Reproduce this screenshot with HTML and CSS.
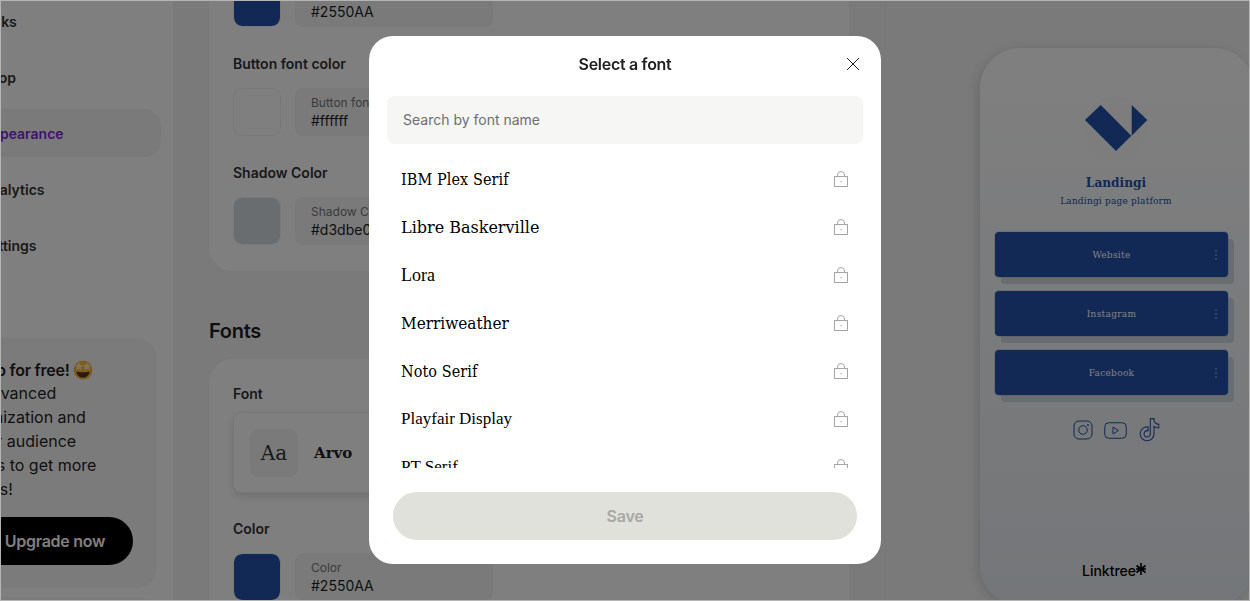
FILE: index.html
```html
<!DOCTYPE html>
<html>
  <head>
    <title>Select a font</title>
    <link rel="stylesheet" href="styles.css">
  </head>
  <body>
    <div class="app">
      <aside class="sidebar">
        <ul class="nav">
          <li class="navitem">Links</li>
          <li class="navitem">Shop</li>
          <li class="navitem active">Appearance</li>
          <li class="navitem">Analytics</li>
          <li class="navitem">Settings</li>
        </ul>
        <div class="upgrade">
          <p class="upgrade-title">Level up for free!
            <svg class="emoji" viewBox="0 0 20 20">
              <circle cx="10" cy="10" r="9.500" fill="#f5b840"/>
              <path d="M3.500 11.500c2 1 11 1 13 0-.5 4-3 6-6.500 6s-6-2-6.500-6z" fill="#5a3210"/>
              <path d="M6 2l1.300 3 3 .3-2.300 2 .7 3L6 8.800 3.300 10.300l.7-3-2.300-2 3-.3z" fill="#ffe9b0"/>
              <path d="M14 2l1.300 3 3 .3-2.300 2 .7 3L14 8.800l-2.700 1.500.7-3-2.300-2 3-.3z" fill="#ffe9b0"/>
            </svg>
          </p>
          <p class="upgrade-text">With advanced<br>&nbsp;customization and<br>for your audience<br>features to get more<br>contacts!</p>
          <button class="upgrade-btn">Upgrade now</button>
        </div>
        <div class="upgrade-next"></div>
      </aside>

      <main class="main">
        <section class="card card-top">
          <div class="color-row">
            <div class="swatch swatch-blue"></div>
            <div class="field"><span class="field-label">Button color</span><span class="field-value">#2550AA</span></div>
          </div>
          <h3 class="label">Button font color</h3>
          <div class="color-row">
            <div class="swatch swatch-white"></div>
            <div class="field"><span class="field-label">Button font color</span><span class="field-value">#ffffff</span></div>
          </div>
          <h3 class="label">Shadow Color</h3>
          <div class="color-row">
            <div class="swatch swatch-shadow"></div>
            <div class="field"><span class="field-label">Shadow Color</span><span class="field-value">#d3dbe0</span></div>
          </div>
        </section>

        <h2 class="section-title">Fonts</h2>
        <section class="card card-fonts">
          <h3 class="label label-first">Font</h3>
          <div class="font-picker">
            <div class="font-aa">Aa</div>
            <div class="font-name">Arvo</div>
          </div>
          <h3 class="label label-color">Color</h3>
          <div class="color-row">
            <div class="swatch swatch-blue"></div>
            <div class="field"><span class="field-label">Color</span><span class="field-value">#2550AA</span></div>
          </div>
        </section>
      </main>

      <aside class="preview">
        <div class="phone">
          <div class="profile">
            <div class="avatar">
              <svg width="64" height="64" viewBox="0 0 64 64">
                <polygon points="16.700,9 1,24 32,55 47.300,39.700" fill="#2550AA"/>
                <polygon points="47.700,9 63.300,24 47.700,39.700" fill="#2550AA"/>
              </svg>
            </div>
            <div class="profile-name">Landingi</div>
            <div class="profile-bio">Landingi page platform</div>
          </div>
          <div class="links">
            <a class="link" href="#">Website<svg class="dots" width="2" height="10" viewBox="0 0 2 10"><circle cx="1" cy="1" r=".8"/><circle cx="1" cy="5" r=".8"/><circle cx="1" cy="9" r=".8"/></svg></a>
            <a class="link" href="#">Instagram<svg class="dots" width="2" height="10" viewBox="0 0 2 10"><circle cx="1" cy="1" r=".8"/><circle cx="1" cy="5" r=".8"/><circle cx="1" cy="9" r=".8"/></svg></a>
            <a class="link" href="#">Facebook<svg class="dots" width="2" height="10" viewBox="0 0 2 10"><circle cx="1" cy="1" r=".8"/><circle cx="1" cy="5" r=".8"/><circle cx="1" cy="9" r=".8"/></svg></a>
          </div>
          <div class="socials">
            <svg width="20" height="20" viewBox="0 0 20 20"><rect x="1" y="1" width="18" height="18" rx="5"/><circle cx="10" cy="10" r="4.300"/><circle cx="15" cy="5" r=".6"/></svg>
            <svg class="social-yt" width="23" height="17" viewBox="0 0 23 17"><rect x=".75" y=".75" width="21.500" height="15.500" rx="4"/><path d="M9 5v7l5.500-3.500z"/></svg>
            <svg class="social-tt" width="26" height="26" viewBox="0 0 24 24"><path d="M16.600 1.500h-3.400v14a2.900 2.900 0 1 1-2.900-2.900c.3 0 .6 0 .9.1V9.200a6.400 6.400 0 1 0 5.400 6.300V8.700a7.600 7.600 0 0 0 4.400 1.400V6.700a4.400 4.400 0 0 1-4.400-5.200z"/></svg>
          </div>
          <div class="brand">Linktree<svg class="brand-mark" width="10" height="12" viewBox="0 0 10 12"><path d="M5 0v12M.5 2.500l9 7M9.500 2.500l-9 7M0 6h10"/></svg></div>
        </div>
      </aside>
    </div>

    <div class="overlay">
      <div class="modal">
        <div class="modal-head">
          <h2 class="modal-title">Select a font</h2>
          <button class="modal-close">
            <svg width="14" height="14" viewBox="0 0 14 14"><path d="M1 1l12 12M13 1L1 13"/></svg>
          </button>
        </div>
        <input class="search" type="text" placeholder="Search by font name">
        <ul class="font-list">
          <li class="font-row"><span class="f-plex">IBM Plex Serif</span><svg class="lock" width="14" height="16" viewBox="0 0 14 16"><rect x=".5" y="5.500" width="13" height="10"/><path d="M3.500 5.500V4a3.500 3.500 0 0 1 7 0v1.500"/><circle class="lock-dot" cx="7" cy="10.500" r=".7"/></svg></li>
          <li class="font-row"><span class="f-libre">Libre Baskerville</span><svg class="lock" width="14" height="16" viewBox="0 0 14 16"><rect x=".5" y="5.500" width="13" height="10"/><path d="M3.500 5.500V4a3.500 3.500 0 0 1 7 0v1.500"/><circle class="lock-dot" cx="7" cy="10.500" r=".7"/></svg></li>
          <li class="font-row"><span class="f-lora">Lora</span><svg class="lock" width="14" height="16" viewBox="0 0 14 16"><rect x=".5" y="5.500" width="13" height="10"/><path d="M3.500 5.500V4a3.500 3.500 0 0 1 7 0v1.500"/><circle class="lock-dot" cx="7" cy="10.500" r=".7"/></svg></li>
          <li class="font-row"><span class="f-merri">Merriweather</span><svg class="lock" width="14" height="16" viewBox="0 0 14 16"><rect x=".5" y="5.500" width="13" height="10"/><path d="M3.500 5.500V4a3.500 3.500 0 0 1 7 0v1.500"/><circle class="lock-dot" cx="7" cy="10.500" r=".7"/></svg></li>
          <li class="font-row"><span class="f-noto">Noto Serif</span><svg class="lock" width="14" height="16" viewBox="0 0 14 16"><rect x=".5" y="5.500" width="13" height="10"/><path d="M3.500 5.500V4a3.500 3.500 0 0 1 7 0v1.500"/><circle class="lock-dot" cx="7" cy="10.500" r=".7"/></svg></li>
          <li class="font-row"><span class="f-play">Playfair Display</span><svg class="lock" width="14" height="16" viewBox="0 0 14 16"><rect x=".5" y="5.500" width="13" height="10"/><path d="M3.500 5.500V4a3.500 3.500 0 0 1 7 0v1.500"/><circle class="lock-dot" cx="7" cy="10.500" r=".7"/></svg></li>
          <li class="font-row"><span class="f-pt">PT Serif</span><svg class="lock" width="14" height="16" viewBox="0 0 14 16"><rect x=".5" y="5.500" width="13" height="10"/><path d="M3.500 5.500V4a3.500 3.500 0 0 1 7 0v1.500"/><circle class="lock-dot" cx="7" cy="10.500" r=".7"/></svg></li>
        </ul>
        <button class="save">Save</button>
      </div>
    </div>
  </body>
</html>
```

FILE: styles.css
```css
* {
  box-sizing: border-box;
}

body {
  margin: 0;
  font-family: Inter, "Liberation Sans", sans-serif;
  color: #1f1f1f;
  overflow: hidden;
}

h2, h3, p, ul {
  margin: 0;
  padding: 0;
}

.app {
  display: flex;
  width: 1250px;
  height: 601px;
  overflow: hidden;
}

/* left menu, cut off by the window edge */
.sidebar {
  flex: none;
  width: 173px;
  height: 601px;
  overflow: hidden;
  background-color: #fff;
}

.nav {
  list-style-type: none;
  display: flex;
  flex-direction: column;
  gap: 8px;
  margin: -3px 0 0 -40px;
}

.navitem {
  display: flex;
  align-items: center;
  width: 201px;
  height: 48px;
  padding-left: 21px;
  border-radius: 16px;
  font-size: 14px;
  font-weight: 600;
  color: #333;
}

.navitem.active {
  background-color: #f5f5f5;
  color: #8129d9;
}

.upgrade {
  width: 237px;
  height: 250px;
  margin: 69px 0 0 -80px;
  padding: 21px 0 0 23px;
  border-radius: 20px;
  background-color: #f7f7f7;
}

.upgrade-title {
  display: flex;
  align-items: center;
  gap: 3px;
  height: 22px;
  font-size: 16px;
  font-weight: 600;
  letter-spacing: -0.25px;
  white-space: nowrap;
}

.emoji {
  width: 20px;
  height: 20px;
}

.upgrade-text {
  font-size: 16px;
  line-height: 24px;
  white-space: nowrap;
}

.upgrade-btn {
  display: block;
  width: 156px;
  height: 48px;
  margin: 16px 0 0 34px;
  border: none;
  border-radius: 24px;
  background-color: #000;
  color: #fff;
  font-family: inherit;
  font-size: 16px;
  font-weight: 600;
  letter-spacing: -0.25px;
}

.upgrade-next {
  width: 237px;
  height: 40px;
  margin: 9px 0 0 -80px;
  border-radius: 20px;
  background-color: #f7f7f7;
}

/* middle column */
.main {
  flex: none;
  width: 713px;
  height: 601px;
  overflow: hidden;
  padding: 0 36px;
  background-color: #f5f5f5;
  border-right: 1px solid #eee;
}

.card {
  width: 640px;
  padding: 0 24px;
  border-radius: 24px;
  background-color: #fff;
}

.card-top {
  margin-top: -40px;
  padding-top: 19px;
  padding-bottom: 26px;
}

.card-fonts {
  padding-top: 25px;
  padding-bottom: 30px;
}

.section-title {
  margin: 48px 0 16px;
  font-size: 20px;
  line-height: 24px;
  font-weight: 600;
  letter-spacing: -0.3px;
}

.label {
  margin: 27px 0 14px;
  font-size: 14px;
  line-height: 20px;
  font-weight: 600;
  color: #333;
}

.label-first {
  margin: 0 0 8px;
}

.label-color {
  margin-top: 26px;
}

.color-row {
  display: flex;
  gap: 14px;
}

.swatch {
  width: 48px;
  height: 48px;
  border: 1px solid #f3f3f3;
  border-radius: 9px;
  background-clip: padding-box;
}

.swatch-blue {
  background-color: #2550AA;
}

.swatch-white {
  background-color: #fff;
}

.swatch-shadow {
  background-color: #d3dbe0;
}

.field {
  display: flex;
  flex-direction: column;
  justify-content: center;
  gap: 2px;
  width: 198px;
  height: 48px;
  padding-left: 16px;
  border-radius: 8px;
  background-color: #f5f5f5;
}

.field-label {
  font-size: 12px;
  line-height: 15px;
  color: #777;
}

.field-value {
  font-size: 14px;
  line-height: 18px;
  color: #1f1f1f;
}

.font-picker {
  display: flex;
  align-items: center;
  gap: 16px;
  width: 592px;
  height: 81px;
  padding-left: 16px;
  border: 1px solid #eee;
  border-radius: 8px;
  box-shadow: 0 4px 8px rgba(0, 0, 0, 0.12);
}

.font-aa {
  display: flex;
  align-items: center;
  justify-content: center;
  width: 48px;
  height: 48px;
  border-radius: 8px;
  background-color: #f5f5f5;
  font-family: "DejaVu Serif", serif;
  font-size: 20px;
  color: #333;
}

.font-name {
  font-family: "DejaVu Serif", serif;
  font-size: 15px;
  font-weight: 700;
  color: #222;
}

/* phone preview */
.preview {
  flex: 1;
  padding: 48px 0 0 94px;
  background-color: #f4f4f4;
}

.phone {
  display: flex;
  flex-direction: column;
  width: 274px;
  height: 557px;
  padding: 48px 0 24px 4px;
  border-radius: 40px;
  background: linear-gradient(#fff, #e8edf2);
  box-shadow: -2px 3px 12px rgba(0, 0, 0, 0.14);
}

.profile {
  display: flex;
  flex-direction: column;
  align-items: center;
  width: 264px;
  font-family: "DejaVu Serif", serif;
  font-stretch: condensed;
  color: #2550AA;
}

.avatar {
  width: 64px;
  height: 64px;
  border-radius: 50%;
  background-color: #fbfbfb;
}

.profile-name {
  margin-top: 12px;
  font-size: 13.500px;
  line-height: 20px;
  font-weight: 700;
}

.profile-bio {
  font-size: 10px;
  line-height: 18px;
  letter-spacing: 0.2px;
}

.links {
  display: flex;
  flex-direction: column;
  gap: 14px;
  width: 233px;
  margin: 22px 0 0 11px;
}

.link {
  position: relative;
  display: flex;
  align-items: center;
  justify-content: center;
  height: 45px;
  padding-bottom: 1px;
  border-radius: 4px;
  background-color: #2550AA;
  box-shadow: 0 0 0 1px rgba(37, 80, 170, 0.15), 6px 7px 0 #d3dbe0;
  font-family: "DejaVu Serif", serif;
  font-stretch: condensed;
  font-size: 10px;
  letter-spacing: 0.3px;
  color: #fff;
  text-decoration: none;
}

.dots {
  position: absolute;
  right: 11px;
  top: 18px;
  fill: #c5cfe6;
}

.socials {
  display: flex;
  align-items: center;
  gap: 8px;
  width: 264px;
  height: 22px;
  margin-top: 24px;
  padding-left: 89px;
}

.socials svg {
  flex: none;
  fill: none;
  stroke: #2550AA;
  stroke-width: 1;
}

.social-yt {
  margin-left: 3px;
}

.social-tt {
  margin-left: 1px;
}

.brand {
  display: flex;
  align-items: center;
  justify-content: center;
  width: 260px;
  margin-top: auto;
  font-size: 14px;
  line-height: 20px;
  font-weight: 500;
  color: #000;
}

.brand-mark {
  flex: none;
  margin: -4px 0 0 0;
  fill: none;
  stroke: #000;
  stroke-width: 1.600;
}

/* dimmed layer and dialog */
.overlay {
  position: fixed;
  top: 0;
  left: 0;
  width: 1250px;
  height: 601px;
  display: flex;
  justify-content: center;
  padding-top: 36px;
  background-color: rgba(0, 0, 0, 0.5);
  box-shadow: inset 0 0 0 1px #b5b5b5;
}

.modal {
  display: flex;
  flex-direction: column;
  width: 512px;
  height: 528px;
  padding: 0 18px;
  border-radius: 24px;
  background-color: #fff;
}

.modal-head {
  position: relative;
  height: 60px;
  padding-top: 16px;
  text-align: center;
}

.modal-title {
  font-size: 16px;
  line-height: 24px;
  font-weight: 600;
  letter-spacing: -0.3px;
}

.modal-close {
  position: absolute;
  top: 21px;
  right: 3px;
  width: 14px;
  height: 14px;
  padding: 0 0 1px;
  border: none;
  background: none;
}

.modal-close svg {
  display: block;
  fill: none;
  stroke: #222;
  stroke-width: 1;
}

.search {
  flex: none;
  width: 476px;
  height: 48px;
  padding: 0 16px 2px;
  border: none;
  border-radius: 8px;
  background-color: #f6f6f4;
  font-family: inherit;
  font-size: 14px;
}

.search::placeholder {
  color: #6e6e6e;
  opacity: 1;
}

.font-list {
  list-style-type: none;
  height: 313px;
  margin-top: 11px;
  overflow: hidden;
}

.font-row {
  display: flex;
  align-items: center;
  justify-content: space-between;
  height: 48px;
  padding: 0 15px 0 14px;
  font-family: "Liberation Serif", serif;
  font-size: 18px;
  color: #000;
}

.f-plex, .f-noto {
  font-family: "DejaVu Serif", serif;
  font-stretch: condensed;
  font-size: 16px;
  letter-spacing: 0.1px;
}

.f-libre {
  font-family: "DejaVu Serif", serif;
  font-size: 16px;
}

.f-merri {
  font-family: "DejaVu Serif", serif;
  font-stretch: condensed;
  font-size: 17px;
}

.f-play, .f-pt {
  font-size: 17px;
}

.lock {
  fill: none;
  stroke: #a6a6a6;
  stroke-width: 1;
}

.lock-dot {
  fill: #a6a6a6;
  stroke: none;
}

.save {
  flex: none;
  width: 464px;
  height: 48px;
  margin: 24px 0 0 6px;
  border: none;
  border-radius: 24px;
  background-color: #e0e1da;
  color: #a8a8a4;
  font-family: inherit;
  font-size: 16px;
  font-weight: 600;
  letter-spacing: -0.2px;
}
```
